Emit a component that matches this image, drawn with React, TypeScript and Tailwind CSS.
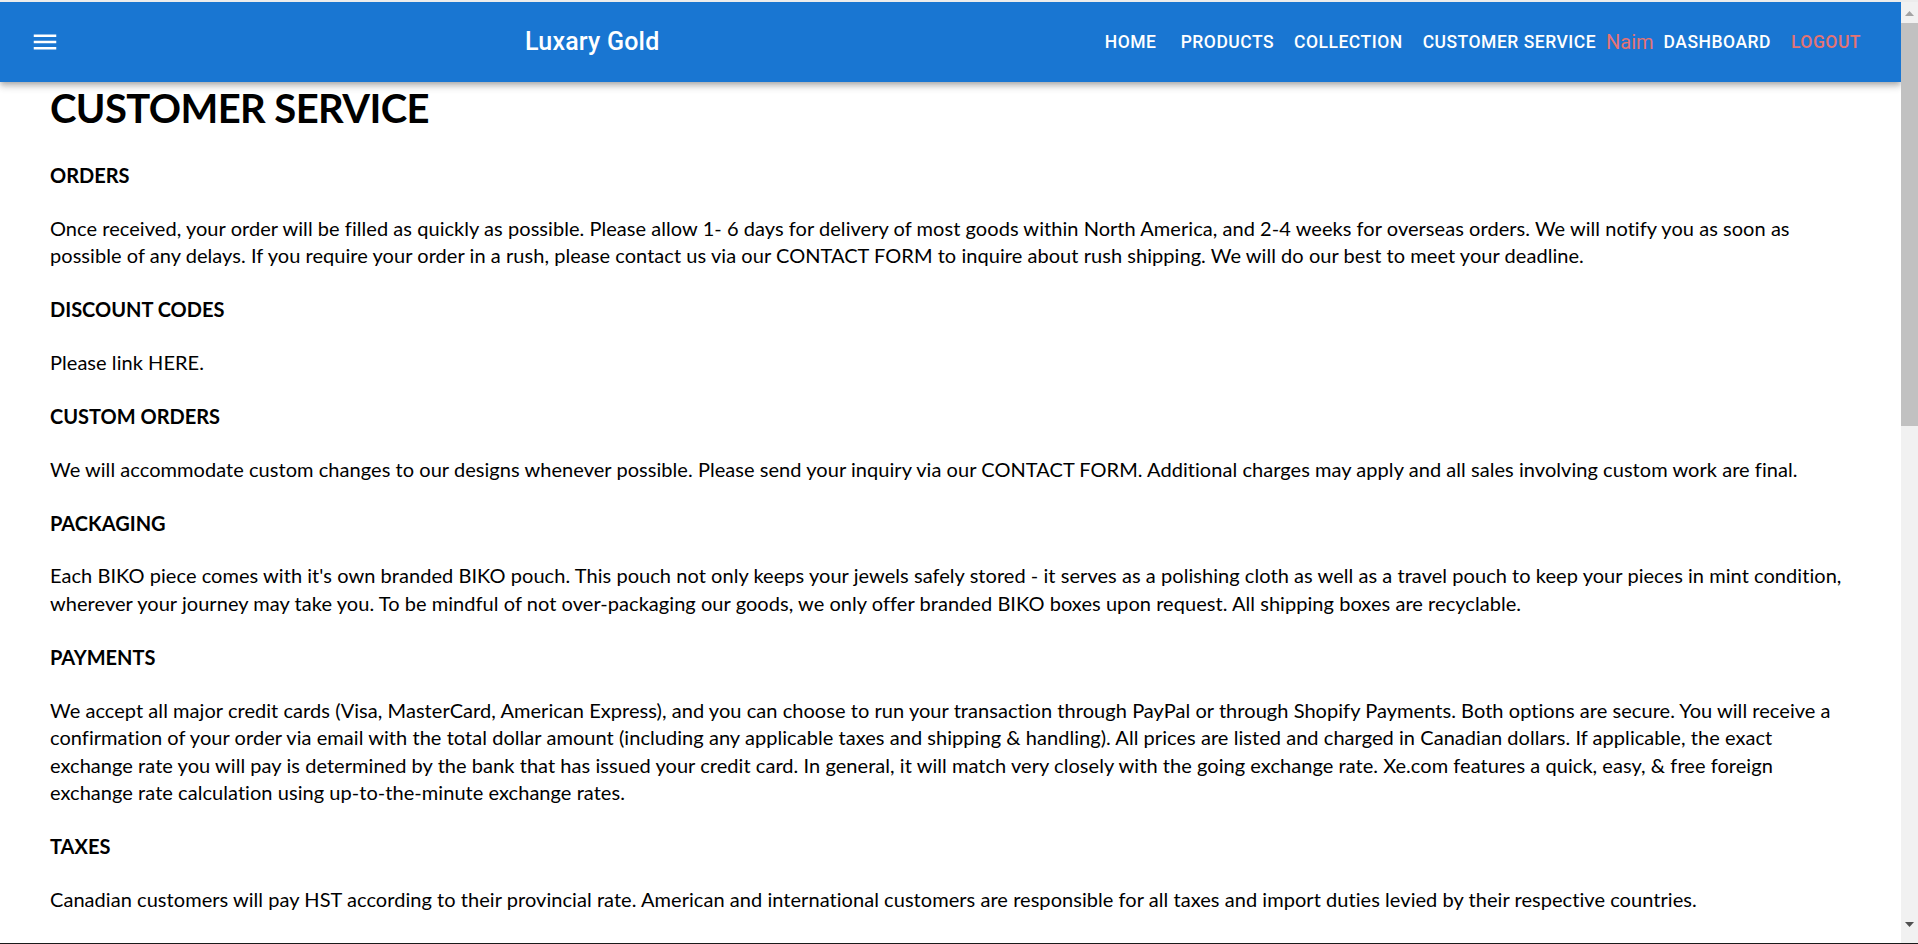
import { Fragment } from 'react'

const sections = [
  {
    title: 'ORDERS',
    lines: [
      'Once received, your order will be filled as quickly as possible. Please allow 1- 6 days for delivery of most goods within North America, and 2-4 weeks for overseas orders. We will notify you as soon as',
      'possible of any delays. If you require your order in a rush, please contact us via our CONTACT FORM to inquire about rush shipping. We will do our best to meet your deadline.',
    ],
  },
  { title: 'DISCOUNT CODES', lines: ['Please link HERE.'] },
  {
    title: 'CUSTOM ORDERS',
    lines: [
      'We will accommodate custom changes to our designs whenever possible. Please send your inquiry via our CONTACT FORM. Additional charges may apply and all sales involving custom work are final.',
    ],
  },
  {
    title: 'PACKAGING',
    lines: [
      "Each BIKO piece comes with it's own branded BIKO pouch. This pouch not only keeps your jewels safely stored - it serves as a polishing cloth as well as a travel pouch to keep your pieces in mint condition,",
      'wherever your journey may take you. To be mindful of not over-packaging our goods, we only offer branded BIKO boxes upon request. All shipping boxes are recyclable.',
    ],
  },
  {
    title: 'PAYMENTS',
    lines: [
      'We accept all major credit cards (Visa, MasterCard, American Express), and you can choose to run your transaction through PayPal or through Shopify Payments. Both options are secure. You will receive a',
      'confirmation of your order via email with the total dollar amount (including any applicable taxes and shipping & handling). All prices are listed and charged in Canadian dollars. If applicable, the exact',
      'exchange rate you will pay is determined by the bank that has issued your credit card. In general, it will match very closely with the going exchange rate. Xe.com features a quick, easy, & free foreign',
      'exchange rate calculation using up-to-the-minute exchange rates.',
    ],
  },
  {
    title: 'TAXES',
    lines: [
      'Canadian customers will pay HST according to their provincial rate. American and international customers are responsible for all taxes and import duties levied by their respective countries.',
    ],
  },
]

const navLinks = ['HOME', 'PRODUCTS', 'COLLECTION', 'CUSTOMER SERVICE']

function MenuIcon() {
  return (
    <svg viewBox="0 0 24 24" className="w-[30px] h-[30px] fill-current">
      <path d="M3 18h18v-2H3v2zm0-5h18v-2H3v2zm0-7v2h18V6H3z" />
    </svg>
  )
}

function NavButton({ label, danger }: { label: string; danger?: boolean }) {
  return (
    <button
      className={`min-w-[80px] px-[10px] py-[7.5px] text-[17.5px] font-medium tracking-[0.5px] leading-[30px] uppercase ${
        danger ? 'text-[#e57373]' : 'text-white'
      }`}
    >
      {label}
    </button>
  )
}

// windows-style page scrollbar
function Scrollbar() {
  return (
    <div className="w-[17px] flex-none flex flex-col bg-[#f1f1f1]">
      <div className="h-[21px] flex justify-center pt-[9px]">
        <svg width="9" height="5" viewBox="0 0 9 5">
          <path d="M0 5h9L4.5 0z" fill="#a3a3a3" />
        </svg>
      </div>
      <div className="h-[403px] bg-[#c1c1c1]" />
      <div className="flex-1" />
      <div className="h-[22px] flex justify-center pt-[1px]">
        <svg width="9" height="5" viewBox="0 0 9 5">
          <path d="M0 0h9L4.5 5z" fill="#505050" />
        </svg>
      </div>
    </div>
  )
}

export default function App() {
  return (
    <div className="h-screen flex bg-white border-t-2 border-t-[#ececec] border-b border-b-[#1a1a1a] overflow-hidden">
      <div className="flex-1 min-w-0 flex flex-col overflow-hidden">
        {/* App bar */}
        <header className="relative z-10 flex-none h-[80px] bg-[#1976d2] text-white flex items-center px-[30px] shadow-[0px_2px_5px_-1px_rgba(0,0,0,0.2),0px_5px_6px_0px_rgba(0,0,0,0.14),0px_1px_12px_0px_rgba(0,0,0,0.12)] font-['Roboto',sans-serif]">
          <button className="-ml-[15px] p-[15px] text-white">
            <MenuIcon />
          </button>
          <h6 className="ml-[450px] text-[25px] font-medium leading-[30px] tracking-[0.2px]">Luxary Gold</h6>
          <div className="flex-1" />
          <nav className="flex items-center">
            {navLinks.map(l => (
              <NavButton key={l} label={l} />
            ))}
            <span className="text-[20px] leading-[30px] text-[#e57373]">Naim</span>
            <NavButton label="DASHBOARD" />
            <NavButton label="LOGOUT" danger />
          </nav>
        </header>

        {/* Content */}
        <main className="flex-1 px-[50px] pt-[2px] text-black font-['Lato','Open_Sans',sans-serif]">
          <h1 className="text-[40px] font-bold leading-[48px] tracking-[-0.6px]">CUSTOMER SERVICE</h1>
          <div className="mt-[30px]">
            {sections.map((s, i) => (
              <section key={s.title} className={i === 0 ? '' : 'mt-[26.5px]'}>
                <h4 className="text-[20px] font-bold leading-[27.6px]">{s.title}</h4>
                <p className="mt-[25px] text-[20px] tracking-[0.05px] leading-[27.6px] whitespace-nowrap">
                  {s.lines.map((line, j) => (
                    <Fragment key={j}>
                      {line}
                      {j < s.lines.length - 1 && <br />}
                    </Fragment>
                  ))}
                </p>
              </section>
            ))}
          </div>
        </main>
      </div>
      <Scrollbar />
    </div>
  )
}
